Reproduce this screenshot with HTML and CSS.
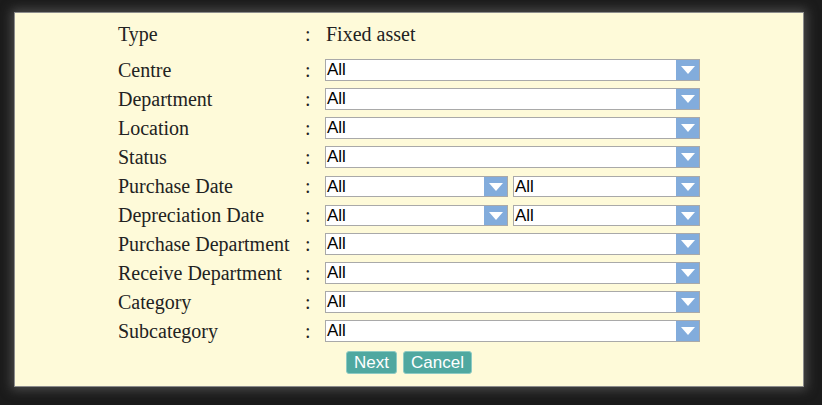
FILE: index.html
```html
<!DOCTYPE html>
<html>
<head>
<meta charset="utf-8">
<link rel="stylesheet" href="styles.css">
</head>
<body>
<div class="panel">
  <div class="row row-type">
    <div class="label">Type</div><div class="colon">:</div><div class="value">Fixed asset</div>
  </div>
  <div class="row">
    <div class="label">Centre</div><div class="colon">:</div>
    <div class="select"><span class="txt">All</span><span class="arrow"><svg width="14" height="9" viewBox="0 0 14 9"><polygon points="0,0 14,0 7,8" fill="#fff"/></svg></span></div>
  </div>
  <div class="row">
    <div class="label">Department</div><div class="colon">:</div>
    <div class="select"><span class="txt">All</span><span class="arrow"><svg width="14" height="9" viewBox="0 0 14 9"><polygon points="0,0 14,0 7,8" fill="#fff"/></svg></span></div>
  </div>
  <div class="row">
    <div class="label">Location</div><div class="colon">:</div>
    <div class="select"><span class="txt">All</span><span class="arrow"><svg width="14" height="9" viewBox="0 0 14 9"><polygon points="0,0 14,0 7,8" fill="#fff"/></svg></span></div>
  </div>
  <div class="row">
    <div class="label">Status</div><div class="colon">:</div>
    <div class="select"><span class="txt">All</span><span class="arrow"><svg width="14" height="9" viewBox="0 0 14 9"><polygon points="0,0 14,0 7,8" fill="#fff"/></svg></span></div>
  </div>
  <div class="row">
    <div class="label">Purchase Date</div><div class="colon">:</div>
    <div class="split">
      <div class="select small"><span class="txt">All</span><span class="arrow"><svg width="14" height="9" viewBox="0 0 14 9"><polygon points="0,0 14,0 7,8" fill="#fff"/></svg></span></div>
      <div class="select small"><span class="txt">All</span><span class="arrow"><svg width="14" height="9" viewBox="0 0 14 9"><polygon points="0,0 14,0 7,8" fill="#fff"/></svg></span></div>
    </div>
  </div>
  <div class="row">
    <div class="label">Depreciation Date</div><div class="colon">:</div>
    <div class="split">
      <div class="select small"><span class="txt">All</span><span class="arrow"><svg width="14" height="9" viewBox="0 0 14 9"><polygon points="0,0 14,0 7,8" fill="#fff"/></svg></span></div>
      <div class="select small"><span class="txt">All</span><span class="arrow"><svg width="14" height="9" viewBox="0 0 14 9"><polygon points="0,0 14,0 7,8" fill="#fff"/></svg></span></div>
    </div>
  </div>
  <div class="row">
    <div class="label">Purchase Department</div><div class="colon">:</div>
    <div class="select"><span class="txt">All</span><span class="arrow"><svg width="14" height="9" viewBox="0 0 14 9"><polygon points="0,0 14,0 7,8" fill="#fff"/></svg></span></div>
  </div>
  <div class="row">
    <div class="label">Receive Department</div><div class="colon">:</div>
    <div class="select"><span class="txt">All</span><span class="arrow"><svg width="14" height="9" viewBox="0 0 14 9"><polygon points="0,0 14,0 7,8" fill="#fff"/></svg></span></div>
  </div>
  <div class="row">
    <div class="label">Category</div><div class="colon">:</div>
    <div class="select"><span class="txt">All</span><span class="arrow"><svg width="14" height="9" viewBox="0 0 14 9"><polygon points="0,0 14,0 7,8" fill="#fff"/></svg></span></div>
  </div>
  <div class="row">
    <div class="label">Subcategory</div><div class="colon">:</div>
    <div class="select"><span class="txt">All</span><span class="arrow"><svg width="14" height="9" viewBox="0 0 14 9"><polygon points="0,0 14,0 7,8" fill="#fff"/></svg></span></div>
  </div>
  <div class="buttons">
    <button class="btn">Next</button><button class="btn">Cancel</button>
  </div>
</div>
</body>
</html>
```
FILE: styles.css
```css
* { box-sizing: border-box; }
html, body { margin: 0; padding: 0; }
body {
  background: #1b1b1b;
  width: 822px;
  height: 405px;
  overflow: hidden;
  padding-top: 12px;
  padding-left: 14px;
}
.panel {
  width: 790px;
  height: 375px;
  background: #fefad9;
  border: 1px solid #8c8c8c;
  box-shadow: 0 0 10px 3px #4a4a4a;
  padding-top: 6px;
  padding-left: 103px;
  font-family: "Liberation Serif", "Times New Roman", serif;
  font-size: 20px;
  color: #222;
}
.row {
  display: grid;
  grid-template-columns: 187px 20px 375px;
  align-items: center;
  height: 29px;
}
.row-type {
  height: 30px;
  margin-bottom: 6px;
}
.label, .colon, .value { line-height: 22px; white-space: nowrap; }
.value { padding-left: 1px; }
.select {
  display: flex;
  align-items: stretch;
  height: 22px;
  background: #fff;
  border: 1px solid #a9a9a9;
  font-family: "Liberation Sans", Arial, sans-serif;
  font-size: 17px;
  color: #000;
}
.select.small { height: 21px; }
.txt {
  flex: 1;
  padding-left: 1px;
  line-height: 20px;
}
.small .txt { line-height: 19px; }
.arrow {
  width: 23px;
  background: #82acdc;
  display: flex;
  align-items: center;
  justify-content: center;
}
.arrow svg { display: block; margin-top: 1px; }
.split {
  display: grid;
  grid-template-columns: 183px 187px;
  column-gap: 5px;
  margin-top: 2px;
}
.buttons {
  display: flex;
  justify-content: center;
  gap: 6px;
  margin-top: 6px;
  margin-left: -103px;
}
.btn {
  height: 23px;
  padding: 0 7px;
  background: #4fa8a0;
  border: 1px solid #8ccac3;
  border-radius: 3px;
  color: #fff;
  font-family: "Liberation Sans", Arial, sans-serif;
  font-size: 17px;
  line-height: 20px;
}
```
